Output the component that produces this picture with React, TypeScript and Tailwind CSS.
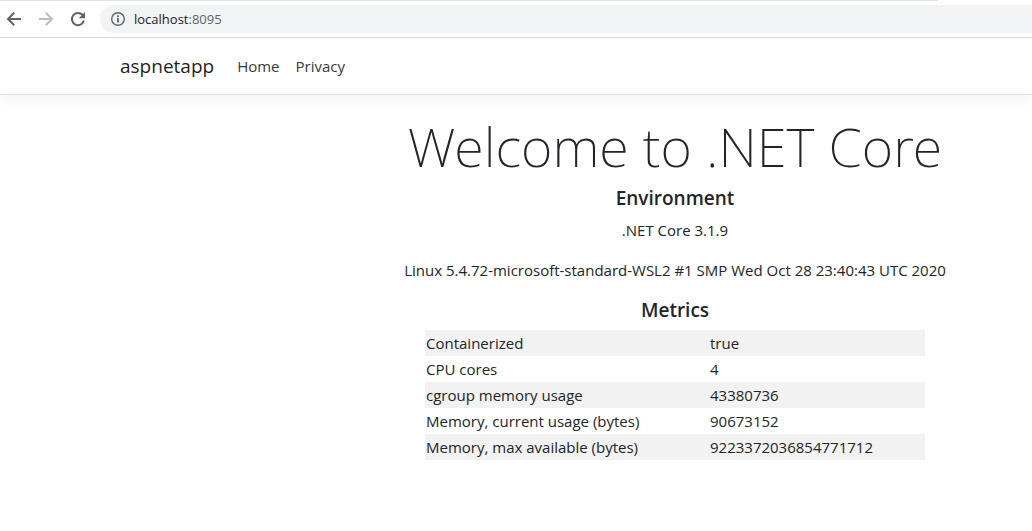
const metrics = [
  { name: "Containerized", value: "true" },
  { name: "CPU cores", value: "4" },
  { name: "cgroup memory usage", value: "43380736" },
  { name: "Memory, current usage (bytes)", value: "90673152" },
  { name: "Memory, max available (bytes)", value: "9223372036854771712" },
];

function BackIcon() {
  return (
    <svg viewBox="0 0 16 16" className="size-4" fill="none" stroke="currentColor" strokeWidth="2" aria-hidden="true">
      <path d="M15 8H2.2M8.2 1.8 2 8l6.2 6.2" />
    </svg>
  );
}

function ForwardIcon() {
  return (
    <svg viewBox="0 0 16 16" className="size-4" fill="none" stroke="currentColor" strokeWidth="2" aria-hidden="true">
      <path d="M1 8h12.8M7.8 1.8 14 8l-6.2 6.2" />
    </svg>
  );
}

function ReloadIcon() {
  return (
    <svg viewBox="0 0 16 16" className="size-4" fill="none" aria-hidden="true">
      <path d="M13.9 9.6A6.1 6.1 0 1 1 12.4 3.8L13.6 5" stroke="currentColor" strokeWidth="2" />
      <path d="M15 1v6.2H8.8Z" fill="currentColor" />
    </svg>
  );
}

function InfoIcon() {
  return (
    <svg viewBox="0 0 16 16" className="size-4" fill="none" aria-hidden="true">
      <circle cx="8" cy="8" r="6.3" stroke="currentColor" strokeWidth="1.4" />
      <path d="M7.1 4.3h1.8v1.7H7.1ZM7.1 7.1h1.8v4.5H7.1Z" fill="currentColor" />
    </svg>
  );
}

function BrowserBar() {
  return (
    <div className="border-b border-[#d8dadd]">
      <div className="mr-[94px] h-px rounded-r-full bg-[#dee1e6]" />
      <div className="flex items-center pt-1 pb-1 pl-1.5 text-[#5f6368]">
        <button type="button" aria-label="Back">
          <BackIcon />
        </button>
        <button type="button" aria-label="Forward" disabled className="ml-4 text-[#babcbe]">
          <ForwardIcon />
        </button>
        <button type="button" aria-label="Reload" className="ml-4">
          <ReloadIcon />
        </button>
        <div className="ml-3.5 flex h-7 flex-1 items-center gap-2 rounded-l-full bg-[#f1f3f4] pl-2.5">
          <InfoIcon />
          <span className="text-[13px] leading-4">
            <span className="text-[#202124]">localhost</span>:8095
          </span>
        </div>
      </div>
    </div>
  );
}

export default function App() {
  return (
    <div className="bg-white font-['Open_Sans','Noto_Sans',sans-serif] text-[15px] leading-6 text-[#212529]">
      <BrowserBar />
      <header>
        <nav className="flex h-[57px] items-center border-b border-[#dee2e6] pl-[120px] shadow-[0_4px_12px_rgba(0,0,0,0.05)]">
          <a href="#" className="text-[19px] leading-[30px] text-black/90">
            aspnetapp
          </a>
          <ul className="ml-[23px] flex gap-4 text-[#343a40]">
            <li>
              <a href="#home">Home</a>
            </li>
            <li>
              <a href="#privacy">Privacy</a>
            </li>
          </ul>
        </nav>
      </header>
      <main className="pt-[18px] pl-[318px] text-center">
        <h1 className="font-['Noto_Sans','Open_Sans',sans-serif] text-[54px] leading-[67px] font-extralight">
          Welcome to .NET Core
        </h1>
        <h2 className="mt-1.5 mb-[7px] text-[19px] leading-[25px] font-semibold">Environment</h2>
        <p className="mb-4">.NET Core 3.1.9</p>
        <p className="mb-4">Linux 5.4.72-microsoft-standard-WSL2 #1 SMP Wed Oct 28 23:40:43 UTC 2020</p>
        <h2 className="mb-[7px] text-[19px] leading-[25px] font-semibold">Metrics</h2>
        <table className="mx-auto w-[500px] text-left">
          <tbody>
            {metrics.map((metric) => (
              <tr key={metric.name} className="odd:bg-[#f2f2f2]">
                <th scope="row" className="w-[284px] p-px font-normal">
                  {metric.name}
                </th>
                <td className="p-px">{metric.value}</td>
              </tr>
            ))}
          </tbody>
        </table>
      </main>
    </div>
  );
}
